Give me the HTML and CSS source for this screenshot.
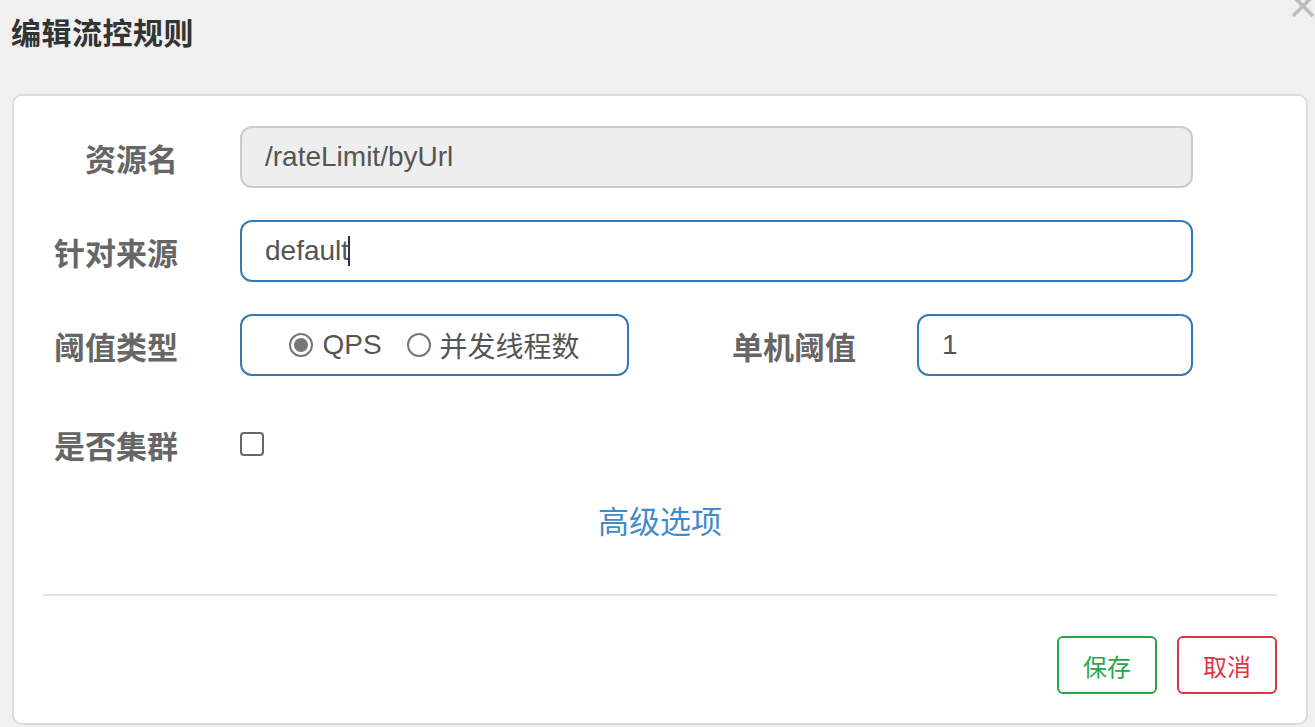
FILE: index.html
```html
<!DOCTYPE html>
<html lang="zh-CN">
<head>
<meta charset="utf-8">
<title>编辑流控规则</title>
<link rel="stylesheet" href="styles.css">
</head>
<body>
<div class="dialog">
  <div class="dialog-header">
    <h3 class="dialog-title">编辑流控规则</h3>
    <svg class="close-icon" width="26" height="24" viewBox="0 0 26 24">
      <path d="M2 -4 L22 16 M22 -4 L2 16" stroke="#bdbdbd" stroke-width="3.6" fill="none"/>
    </svg>
  </div>
  <div class="card">
    <div class="form">
      <div class="row">
        <div class="label">资源名</div>
        <div class="field disabled">/rateLimit/byUrl</div>
      </div>
      <div class="row">
        <div class="label">针对来源</div>
        <div class="field focus">default<span class="caret"></span></div>
      </div>
      <div class="row">
        <div class="label">阈值类型</div>
        <div class="field radio-box">
          <span class="radio checked"></span><span class="radio-text">QPS</span>
          <span class="radio second"></span><span class="radio-text">并发线程数</span>
        </div>
        <div class="label label-mid">单机阈值</div>
        <div class="field focus small">1</div>
      </div>
      <div class="row row-check">
        <div class="label">是否集群</div>
        <div class="check-wrap"><span class="checkbox"></span></div>
      </div>
      <div class="advanced">高级选项</div>
    </div>
    <div class="divider"></div>
    <div class="actions">
      <button class="btn btn-save">保存</button>
      <button class="btn btn-cancel">取消</button>
    </div>
  </div>
</div>
</body>
</html>
```
FILE: styles.css
```css
* { box-sizing: border-box; }
html, body { margin: 0; padding: 0; }
body {
  background: #f0f0f0;
  font-family: "Liberation Sans", "Noto Sans CJK SC", sans-serif;
  width: 1315px;
  height: 727px;
  overflow: hidden;
}
.dialog { position: relative; }
.dialog-header {
  height: 94px;
  padding-left: 11px;
}
.dialog-title {
  margin: 0;
  font-size: 30px;
  font-weight: bold;
  color: #333;
  line-height: 62px;
  font-family: "Noto Sans CJK SC", sans-serif;
  letter-spacing: 0.5px;
}
.close-icon {
  position: absolute;
  top: 0;
  right: -2px;
}
.card {
  margin: 0 7px 0 12px;
  height: 631px;
  background: #fff;
  border: 2px solid #dcdcdc;
  border-radius: 10px;
  padding-top: 30px;
}
.form { display: flex; flex-direction: column; }
.row {
  display: flex;
  align-items: center;
  height: 62px;
  margin-bottom: 32px;
}
.row-check { margin-top: 5px; margin-bottom: 0; }
.label {
  width: 164px;
  flex: none;
  text-align: right;
  font-size: 31px;
  font-weight: bold;
  color: #666;
  font-family: "Noto Sans CJK SC", sans-serif;
  margin-right: 62px;
}
.label-mid { width: 227px; margin-right: 61px; }
.field {
  height: 62px;
  width: 953px;
  border: 2px solid #337ab7;
  border-radius: 12px;
  padding-left: 23px;
  font-size: 28px;
  color: #555;
  display: flex;
  align-items: center;
}
.field.disabled {
  background: #eee;
  border-color: #ccc;
}
.caret {
  display: inline-block;
  width: 2px;
  height: 30px;
  background: #333;
  margin-left: -1px;
}
.radio-box {
  width: 389px;
  justify-content: center;
  padding-left: 0;
  font-family: "Liberation Sans", "Noto Sans CJK SC", sans-serif;
  font-size: 28px;
}
.radio {
  width: 24px;
  height: 24px;
  border: 2px solid #777;
  border-radius: 50%;
  display: inline-flex;
  align-items: center;
  justify-content: center;
  margin-right: 9px;
  flex: none;
}
.radio.checked::after {
  content: "";
  width: 14px;
  height: 14px;
  border-radius: 50%;
  background: #777;
}
.radio.second { margin-left: 25px; }
.radio-text { color: #555; }
.field.small { width: 276px; }
.check-wrap { display: flex; align-items: center; }
.checkbox {
  display: inline-block;
  width: 24px;
  height: 24px;
  border: 2px solid #666;
  border-radius: 4px;
}
.advanced {
  margin-top: 24px;
  text-align: center;
  font-size: 31px;
  line-height: 42px;
  color: #428bca;
  font-family: "Noto Sans CJK SC", sans-serif;
}
.divider {
  margin: 53px 29px 0 29px;
  height: 2px;
  background: #e3e3e3;
}
.actions {
  display: flex;
  justify-content: flex-end;
  gap: 20px;
  padding: 40px 29px 0 0;
}
.btn {
  width: 100px;
  height: 58px;
  background: #fff;
  border: 2px solid;
  border-radius: 6px;
  font-size: 24px;
  font-family: "Noto Sans CJK SC", sans-serif;
  padding: 0;
}
.btn-save { border-color: #28a745; color: #28a745; }
.btn-cancel { border-color: #dc3545; color: #dc3545; }
```
